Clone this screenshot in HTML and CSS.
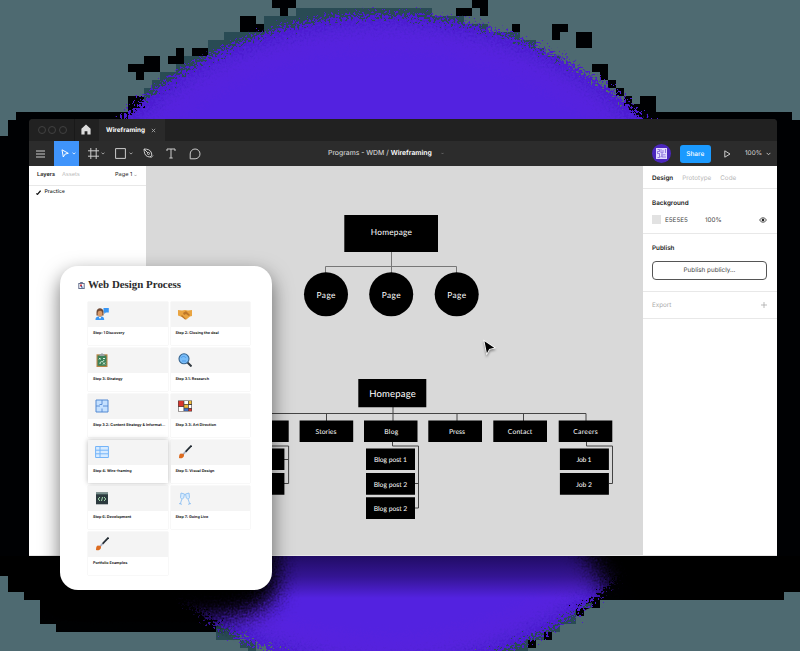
FILE: index.html
```html
<!DOCTYPE html>
<html lang="en">
<head>
<meta charset="utf-8">
<title>Wireframing</title>
<link rel="stylesheet" href="styles.css">
</head>
<body>
<main class="stage">
  <svg class="backdrop" viewBox="0 0 800 651" aria-hidden="true">
    <defs>
      <filter id="grain" x="-5%" y="-5%" width="110%" height="110%">
        <feTurbulence type="fractalNoise" baseFrequency="0.45" numOctaves="2" seed="4" result="n"/>
        <feDisplacementMap in="SourceGraphic" in2="n" scale="32" xChannelSelector="R" yChannelSelector="G"/>
      </filter>
      <filter id="soft" x="-30%" y="-80%" width="160%" height="260%">
        <feGaussianBlur stdDeviation="11" result="b"/>
        <feTurbulence type="fractalNoise" baseFrequency="0.5" numOctaves="2" seed="9" result="n"/>
        <feDisplacementMap in="b" in2="n" scale="20" xChannelSelector="R" yChannelSelector="G"/>
      </filter>
      <radialGradient id="glow"><stop offset=".86" stop-color="#5220e0"/><stop offset=".93" stop-color="#5624de"/><stop offset="1" stop-color="#4a1dce"/></radialGradient>
      <linearGradient id="under" x1="0" y1="555" x2="0" y2="598" gradientUnits="userSpaceOnUse">
        <stop offset="0" stop-color="#050020" stop-opacity=".65"/><stop offset=".5" stop-color="#050020" stop-opacity=".4"/><stop offset="1" stop-color="#050020" stop-opacity="0"/>
      </linearGradient>
      <clipPath id="top"><path d="M100 0H660V135H100Z"/></clipPath>
      <clipPath id="bottom"><path d="M150 540H640V651H150Z"/></clipPath>
      <clipPath id="lower"><path d="M0 556H800V592H784V600H600L575 611 540 632 500 651H250L216 632H56V624H40V600H24V592H8V576H0Z"/></clipPath>
    </defs>
    <path class="halo" d="M16 112H792V120H800V592H784V600H600V608H590L540 628H216V632H56V624H40V600H24V592H8V576H0V136H8V120H16Z"/>
    <path class="teal" d="M144 96v-8h8v-8h8v-8h16v-8h8v-8h16v-8h8v-8h16v-8h16v-8h24v-8h32v-8h136v8h32v8h24v8h32v8h16v8h8v8h16v8h8v8h8v8h8v8h8v8h8v8h8v8h8v8h8v8h24v8H144zM216 624h24v16h16v11h-8v-3h-8v-8h-24zM600 600h-8v8h-16v16h-16v8h-8v8h-16v8h-8v3h-40v-20z"/>
    <path class="halo" d="M272 0h24v8h-8v8h-8v-8h-8zM240 16h16v8h8v8h-24zM192 48h16v8h-16zM176 48h8v16h-16v-8h8zM144 56h16v16h-16v8h-8v-8h-8v-8h16zM128 96h16v8h8v8h-24zM472 0h16v16h-8v-8h-8zM456 8h16v8h-16zM512 24h8v8h-8zM552 24h16v8h-8v8h-8zM576 32h16v16h-16zM592 64h16v16h8v8h8v8h8v8h8v8h-16v-16h-8v-8h-8v-8h-8v-8h-8zM640 96h16v16h-16zM592 600h8v8h-8zM576 608h8v8h-8zM544 632h8v8h-8zM528 640h8v8h-8z"/>
    <g clip-path="url(#top)"><ellipse fill="url(#glow)" cx="383" cy="343" rx="357" ry="328" filter="url(#grain)"/></g>
    <g clip-path="url(#bottom)"><ellipse fill="url(#glow)" cx="387" cy="343" rx="329" ry="329" filter="url(#grain)"/></g>
    <g clip-path="url(#lower)">
      <rect x="150" y="555" width="490" height="43" fill="url(#under)"/>
      <path class="halo" filter="url(#soft)" d="M-20 530H276V596L250 614 215 620H-20z"/>
      <path class="halo" filter="url(#soft)" d="M572 530H860V640H670L606 588z"/>
    </g>
  </svg>

  <section class="window">
    <header class="tabs">
      <div class="lights"><i></i><i></i><i></i></div>
      <div class="home"><svg viewBox="0 0 10 11"><path fill="#ddd" d="M5 .4.4 4.8V10.5h3.2V7.2h2.8v3.3h3.2V4.8z"/></svg></div>
      <div class="tab"><b>Wireframing</b><svg viewBox="0 0 6 6"><path d="m1 1 4 4m0-4L1 5"/></svg></div>
    </header>
    <div class="toolbar">
      <div class="tools">
        <span class="tool burger"><svg class="line" width="9" height="8" viewBox="0 0 9 8"><path d="M0 1h9M0 4h9M0 7h9"/></svg></span>
        <span class="tool active"><svg class="line" width="8" height="9" viewBox="0 0 8 9"><path d="m1 .8 6.3 3.5-3.2.8L2.3 8z"/></svg><svg class="line caret" viewBox="0 0 4 3"><path d="m.5.6 1.5 1.5L3.5.6"/></svg></span>
        <span class="tool frame"><svg class="line" width="11" height="11" viewBox="0 0 11 11"><path d="M2.8 0v11M8.2 0v11M0 2.8h11M0 8.2h11"/></svg><svg class="line caret" viewBox="0 0 4 3"><path d="m.5.6 1.5 1.5L3.5.6"/></svg></span>
        <span class="tool shape"><svg class="line" width="11" height="11" viewBox="0 0 11 11"><path d="M.6.6h9.8v9.8H.6z"/></svg><svg class="line caret" viewBox="0 0 4 3"><path d="m.5.6 1.5 1.5L3.5.6"/></svg></span>
        <span class="tool pen"><svg class="line" width="11" height="11" viewBox="0 0 11 11"><path d="M1 1c3.5 0 6.5.8 7.500 4l.3 2.200L7 9l-2.300-.4C1.800 7.600 1.200 4.500 1 1zM1 1l4 4M10 7.500 7.500 10"/><circle cx="5.500" cy="5.500" r="1"/></svg></span>
        <span class="tool type"><svg class="line" width="10" height="11" viewBox="0 0 10 11"><path d="M1 3V1h8v2M5 1v9M3.300 10h3.400"/></svg></span>
        <span class="tool chat"><svg class="line" width="12" height="12" viewBox="0 0 12 12"><path d="M1.200 10.800V6a4.900 4.900 0 1 1 4.900 4.800z"/></svg></span>
      </div>
      <div class="crumb">Programs - WDM / <b>Wireframing</b><svg class="line caret tiny" viewBox="0 0 4 3"><path d="m.5.6 1.5 1.5L3.5.6"/></svg></div>
      <div class="actions">
        <span class="avatar"><svg width="11" height="11" viewBox="0 0 11 11"><path fill="#e4dcff" d="M0 0h11v11H0z"/><path fill="none" stroke="#5b35c9" stroke-width=".6" d="M1.500 1.500h2v2h-2v2h2v4h-2M5 1v4h2V2M9.500 1v4M5 6.800h4.500M5 9.500V8h2v2M9 8v2"/></svg></span>
        <span class="share">Share</span>
        <svg class="line play" width="7" height="8" viewBox="0 0 7 8"><path d="m.8.8 5.200 3.200L.8 7.200z"/></svg>
        <span class="zoom">100%</span><svg class="line caret big" viewBox="0 0 4 3"><path d="m.5.6 1.5 1.5L3.5.6"/></svg>
      </div>
    </div>
    <div class="body">
      <aside class="layers">
        <div class="layer-tabs"><b>Layers</b><span class="muted">Assets</span><span class="page">Page 1</span><svg class="caret tiny" viewBox="0 0 4 3"><path d="m.5.6 1.5 1.5L3.5.6"/></svg></div>
        <div class="layer"><svg width="5" height="5" viewBox="0 0 5 5"><path fill="none" stroke="#111" stroke-width="1.300" d="m.3 3.500 1.200.8L4.600.7"/></svg>Practice</div>
      </aside>
      <svg class="canvas" viewBox="146 166 497 390">
        <path class="wire" d="M391.500 252v22M325.500 274v-7.500h131V274"/>
        <rect x="344.300" y="215" width="93.700" height="37"/>
        <circle cx="326" cy="294.300" r="22"/><circle cx="391.200" cy="294.300" r="22"/><circle cx="456.700" cy="294.300" r="22"/>
        <g class="label mid"><text x="391.300" y="235.200" textLength="41">Homepage</text><text x="326" y="297.500" textLength="19">Page</text><text x="391.200" y="297.500" textLength="19">Page</text><text x="456.700" y="297.500" textLength="19">Page</text></g>
        <path class="wire dark" d="M150 413.500h436V421M326.500 413v8M393 407v14M457 413v8M523.500 413v8M392.500 442v4h26v62H415M415 483.500h3.500M586.500 442v4h26v37.500H609M262 446h26.600v37.500H284M284 459.500h4.500"/>
        <path d="M358.300 379h68v28.300h-68zM235 420.500h53.700V442H235zM299.600 420.500h53.600V442h-53.600zM364 420.500h53.500V442H364zM428.300 420.500H482V442h-53.700zM493.300 420.500H547V442h-53.700zM558.700 420.500h53.600V442h-53.600zM366 448.400h49v21.600h-49zM366 473h49v21.700h-49zM366 497.300h49V519h-49zM559.900 448.400h49v21.600h-49zM559.900 473h49v21.700h-49zM236 448.400h48.400v21.600H236zM236 473h48.400v21.700H236z"/>
        <g class="label big"><text x="392.500" y="397" textLength="46.500">Homepage</text></g>
        <g class="label small"><text x="326" y="434" textLength="21">Stories</text><text x="391.300" y="434" textLength="14">Blog</text><text x="457" y="434" textLength="16">Press</text><text x="520" y="434" textLength="24.500">Contact</text><text x="585.500" y="434" textLength="24.500">Careers</text><text x="390.500" y="462" textLength="33">Blog post 1</text><text x="390.500" y="486.500" textLength="33.500">Blog post 2</text><text x="390.500" y="511" textLength="33.500">Blog post 2</text><text x="584" y="462" textLength="15">Job 1</text><text x="584" y="486.500" textLength="16">Job 2</text></g>
        <path class="pointer" d="m484.500 341.300 9.700 6.400-5 1.300-2.300 4.200z"/>
      </svg>
      <aside class="props">
        <div class="prop-tabs"><b>Design</b><span>Prototype</span><span>Code</span></div>
        <div class="block background"><b>Background</b><div class="color"><i></i><span class="hex">E5E5E5</span><span>100%</span><svg width="8" height="6" viewBox="0 0 8 6"><path fill="none" stroke="#222" stroke-width=".8" d="M.5 3Q4-1.500 7.500 3 4 7.500.5 3z"/><circle cx="4" cy="3" r="1.300" fill="#222"/></svg></div></div>
        <div class="block publish"><b>Publish</b><div class="button">Publish publicly...</div></div>
        <div class="block export"><span>Export</span><svg width="6" height="6" viewBox="0 0 6 6"><path stroke="#aaa" stroke-width=".8" d="M3 0v6M0 3h6"/></svg></div>
      </aside>
    </div>
  </section>

  <section class="card">
    <h1><svg width="7" height="7" viewBox="0 0 7 7"><path fill="#66708e" d="M.3 1h1.500l.7-1h2l.7 1h1.500v6H.3z"/><path fill="#fff" d="M1.300 2h4.400v4H1.300z"/><path fill="#d33b45" d="M2 2.500h2v2H2z"/><path fill="#2755a2" d="m3 3.500 2.500 2H3z"/></svg><span>Web Design Process</span></h1>
    <div class="steps">
      <article><div class="pic"><svg viewBox="0 0 14 14"><path fill="#3796f5" d="M8.500 1h5.300v4.500h-3L9.300 7V5.500h-.8zM.5 13c0-3 2-3.700 4.500-3.700S9.200 10 9.200 13z"/><path fill="#704a35" d="M1.500 8.500V5c0-5 7-5 7 0v3.500z"/><ellipse cx="5" cy="6.800" rx="2.400" ry="3" fill="#d99967"/><path fill="#fff" d="m3.800 10 1.200 2 1.200-2z"/></svg></div><p>Step: 1 Discovery</p></article>
      <article><div class="pic"><svg viewBox="0 0 14 14"><path fill="#e9a441" d="m0 3 4 .6L7 3l3 .6L14 3v6l-2 .5-4 3.300L4 10 0 8.500z"/><path fill="#bd762a" d="m5 6 3-2 4 4-1 1-3-2-2 1zM3 9l1-1 4 4-1 .5z"/></svg></div><p>Step 2: Closing the deal</p></article>
      <article><div class="pic"><svg viewBox="0 0 14 14"><path fill="#b98546" d="M1.500 1.300h11V14h-11z"/><path fill="#3a8058" d="M2.600 2.500h8.800v10.300H2.600z"/><path fill="#9aa2a4" d="M4.500 1H6l1-1 1 1h1.500v2h-5z"/><path fill="none" stroke="#d9f1df" stroke-width="1" d="m4 5 1.500 1.500M5.500 5 4 6.500M8 5.500h2M5 11c0-4 3-1 4-4M8 9.500l2 2m0-2-2 2"/></svg></div><p>Step 3: Strategy</p></article>
      <article><div class="pic"><svg viewBox="0 0 14 14"><path stroke="#343c43" stroke-width="2" d="m9 9 4.500 4.500"/><circle cx="6" cy="5.800" r="5" fill="#79bdf8" stroke="#38658f" stroke-width="1.100"/><path fill="none" stroke="#4e9be8" d="M3 5c1-2 4-2 5 0M4 8h4"/></svg></div><p>Step 3.1: Research</p></article>
      <article><div class="pic"><svg viewBox="0 0 14 14"><path fill="#c5e1ff" stroke="#5389d2" stroke-width="1" d="M1 1h12v12H1z"/><path fill="none" stroke="#5389d2" stroke-width=".9" d="M1 7h4M7 1v4.500H4.500M8 7h5M7 13V9.500"/></svg></div><p>Step 3.2: Content Strategy &amp; Informat...</p></article>
      <article><div class="pic"><svg viewBox="0 0 14 14"><path fill="#4c4341" d="M0 1.500h14v11H0z"/><path fill="#fff" d="M.6 8h4.900v3.900H.6zM6.300 2.100H10V5H6.300zM10.800 6h2.600v3h-2.600z"/><path fill="#d9362e" d="M.6 2.100h4.900v5.100H.6zM10.800 9.700h2.600v2.200h-2.600z"/><path fill="#f3bf3a" d="M6.300 5.800H10v3H6.300zM10.800 2.100h2.600v3h-2.600z"/><path fill="#3e72ca" d="M6.300 9.500H10v2.400H6.300z"/></svg></div><p>Step 3.3: Art Direction</p></article>
      <article class="current"><div class="pic"><svg viewBox="0 0 14 14"><path fill="#d7ebff" stroke="#74b4f8" d="M.6 1.500h12.800v11H.6zM.6 5.200h12.800M.6 8.800h12.800M5 1.500v11"/></svg></div><p>Step 4: Wire-framing</p></article>
      <article><div class="pic"><svg viewBox="0 0 14 14"><path stroke="#222b33" stroke-width="1.700" d="M13.500.5 7.500 6.800"/><path stroke="#aab0c2" stroke-width="1.800" d="M7.500 6.800 5 9.300"/><path fill="#dc6b20" d="M5.800 9c1 3-1.500 5-4.800 4C1.300 11 .8 9.500 2.800 8.500z"/></svg></div><p>Step 5: Visual Design</p></article>
      <article><div class="pic"><svg viewBox="0 0 14 14"><path fill="#2c3a3e" d="M1 1.500h12v11.800H1z"/><path fill="#78908d" d="M1 1.500h12v1.800H1z"/><path fill="none" stroke="#a6dcb0" d="M5 6 3.200 8 5 10m4-4 1.800 2L9 10M7.500 6l-1 4"/></svg></div><p>Step 6: Development</p></article>
      <article><div class="pic"><svg viewBox="0 0 14 14"><path fill="#d6ebff" stroke="#8dc0f2" stroke-width=".9" d="m3 2 3.500 1-.8 4c-1 1.500-3 1-3.200-.5zM11 2 7.500 3l.8 4c1 1.500 3 1 3.200-.5zM3.800 8.200 2.300 13m-1.300-.5 3 .8M10.200 8.200l1.500 4.800m1.300-.5-3 .8"/></svg></div><p>Step 7: Going Live</p></article>
      <article><div class="pic"><svg viewBox="0 0 14 14"><path stroke="#222b33" stroke-width="1.700" d="M13.500.5 7.500 6.800"/><path stroke="#aab0c2" stroke-width="1.800" d="M7.500 6.800 5 9.300"/><path fill="#dc6b20" d="M5.800 9c1 3-1.500 5-4.800 4C1.300 11 .8 9.500 2.800 8.500z"/></svg></div><p>Portfolio Examples</p></article>
    </div>
  </section>
</main>
</body>
</html>
```
FILE: styles.css
```css
* { box-sizing: border-box; }
body { margin: 0; }
svg { display: block; flex: none; }
.stage {
  position: relative;
  width: 800px;
  height: 651px;
  overflow: hidden;
  padding: 119px 23px 0 29px;
  background: #4e6a71;
  font: 6px/1 Inter, "Liberation Sans", sans-serif;
  text-rendering: geometricPrecision;
  color: #222;
}
.backdrop { position: absolute; inset: 0; width: 800px; height: 651px; }
.halo { fill: #000103; }
.teal { fill: #294b54; }

.window { position: relative; height: 436.5px; overflow: hidden; border-radius: 4px 4px 0 0; background: #222; }
.tabs { display: flex; height: 22px; background: #212121; }
.lights { display: flex; align-items: center; gap: 2.5px; width: 46px; padding-left: 8.5px; border-right: 1px solid #191919; }
.lights i { width: 8px; height: 8px; border: 1px solid #414141; border-radius: 50%; }
.home { width: 24px; padding: 5px 0 0 5.5px; }
.home svg { width: 10px; height: 11px; }
.tab { display: flex; align-items: center; gap: 6px; width: 66px; padding-left: 7px; background: #2a2a2a; color: #fff; font-size: 6.4px; }
.tab svg { width: 5px; height: 5px; stroke: #aaa; stroke-width: 1; }
.toolbar { display: flex; align-items: center; justify-content: space-between; position: relative; height: 25px; background: #2c2c2c; color: #ddd; }
.line { fill: none; stroke: #ccc; stroke-width: 1; }
.caret { width: 4px; height: 3px; fill: none; stroke: #bbb; stroke-width: .8; }
.tools { display: flex; height: 25px; }
.tool { display: flex; align-items: center; gap: 2.5px; }
.burger { width: 25px; padding-left: 7px; }
.active { width: 25px; padding-left: 7px; background: #3f94fb; }
.active .line { stroke: #fff; }
.frame { width: 28px; padding-left: 8.5px; }
.shape { width: 28px; padding-left: 8px; }
.pen { width: 23px; padding-left: 8px; }
.type { width: 23px; padding-left: 8px; }
.chat { padding-left: 7.5px; }
.crumb { position: absolute; left: 299px; display: flex; align-items: center; white-space: pre; font-size: 6.88px; color: #e2e2e2; }
.crumb b { color: #fff; font-weight: 600; }
.crumb svg { margin-left: 9px; }
.actions { display: flex; align-items: center; padding-right: 6px; }
.avatar { display: grid; place-items: center; width: 19px; height: 19px; border-radius: 50%; background: #4b26bd; }
.share { margin-left: 9px; width: 31.5px; height: 18px; border-radius: 3px; background: #1b9aff; color: #fff; font-size: 6.5px; font-weight: 500; line-height: 18px; text-align: center; }
.play { margin-left: 12.5px; }
.zoom { width: 17px; margin: 0 4px 0 14.5px; font-size: 6.4px; }
.big { width: 5px; height: 4px; }

.body { display: flex; height: 389.5px; background: #d9d9d9; border-bottom: 1px solid #e8e8e8; }
.layers { flex: none; width: 117px; background: #fff; }
.layer-tabs { display: flex; align-items: center; height: 20px; padding-left: 8px; border-bottom: 1px solid #e8e8e8; font-size: 5.6px; }
.layer-tabs b { font-weight: 600; width: 25px; }
.muted { width: 53px; color: #b8b8b8; }
.page { margin-right: 2px; }
.tiny { width: 3px; stroke: #888; }
.layer { display: flex; align-items: center; gap: 4px; height: 13px; padding-left: 6.5px; font-size: 5.2px; font-weight: 500; }
.canvas { width: 497px; height: 390px; }
.wire { fill: none; stroke: #777; stroke-width: 1; }
.dark { stroke: #444; }
.label { fill: #fff; font-family: Lato, sans-serif; text-anchor: middle; }
.mid { font-size: 8.3px; }
.label.big { font-size: 9.5px; }
.small { font-size: 6.8px; }
.pointer { stroke: #fff; stroke-width: 1.6; paint-order: stroke; filter: drop-shadow(0 2px 1px rgba(0,0,0,.35)); }

.props { flex: 1; background: #fff; }
.prop-tabs { display: flex; gap: 9px; height: 23px; padding: 8.5px 0 0 9px; border-bottom: 1px solid #e8e8e8; font-size: 6.3px; color: #b8b8b8; }
.prop-tabs b { color: #222; font-weight: 600; }
.block { padding: 0 10px 0 9px; border-bottom: 1px solid #e8e8e8; font-size: 6.3px; }
.block b { display: block; font-weight: 600; }
.background { height: 45px; padding-top: 10.5px; }
.color { display: flex; align-items: center; height: 9px; margin-top: 9.5px; color: #444; }
.color i { width: 9px; height: 9px; margin-right: 4px; background: #e2e2e2; }
.hex { width: 40px; }
.color svg { margin-left: auto; }
.publish { height: 57.5px; padding-top: 10.5px; }
.button { height: 19px; margin-top: 10px; border: 1px solid #555; border-radius: 4px; line-height: 17px; text-align: center; color: #444; }
.export { display: flex; align-items: center; justify-content: space-between; height: 27.5px; color: #aaa; }

.card { position: absolute; left: 59.5px; top: 266px; width: 212.5px; height: 324px; padding: 13px 21px 0 28.5px; border-radius: 18px; background: #fff; box-shadow: 0 8px 20px rgba(0,0,0,.55); }
.card h1 { display: flex; align-items: center; gap: 3px; height: 12px; margin: 0 0 10.5px -10px; font: bold 10.9px/12px "Liberation Serif", serif; white-space: nowrap; color: #2b2b2b; }
.steps { display: grid; grid-template-columns: 79.5px 79.5px; gap: 3px 3px; grid-auto-rows: 43px; }
.steps article { overflow: hidden; background: #fff; box-shadow: 0 0 1px rgba(0,0,0,.16); }
.steps .current { box-shadow: 0 0 5px rgba(0,0,0,.28); }
.pic { height: 25px; padding: 5.5px 0 0 7px; background: #f4f4f4; }
.pic svg { width: 14px; height: 14px; fill: none; }
.steps p { margin: 3.5px 0 0 5px; font-size: 3.75px; line-height: 5px; font-weight: 700; white-space: nowrap; color: #222; }
```
